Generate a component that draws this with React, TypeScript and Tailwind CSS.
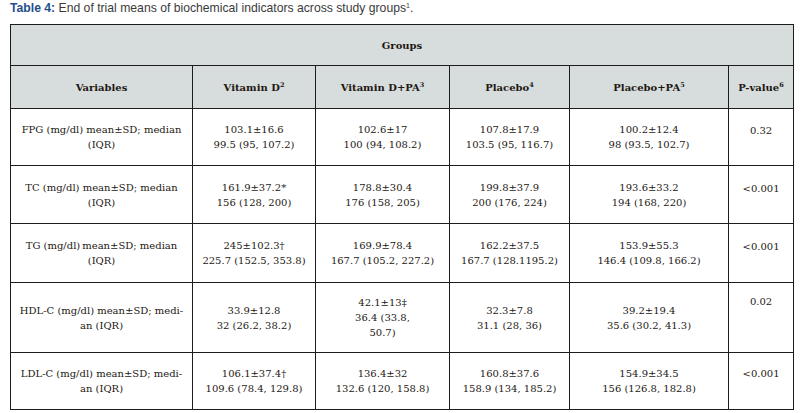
import React from 'react';

type Row = {
  label: string[];
  cells: string[][];
  p: string;
  h: string;
  pPad: string;
};

const rows: Row[] = [
  {
    label: ['FPG (mg/dl) mean±SD; median', '(IQR)'],
    cells: [
      ['103.1±16.6', '99.5 (95, 107.2)'],
      ['102.6±17', '100 (94, 108.2)'],
      ['107.8±17.9', '103.5 (95, 116.7)'],
      ['100.2±12.4', '98 (93.5, 102.7)'],
    ],
    p: '0.32',
    h: 'h-[57px]',
    pPad: 'pt-[14px]',
  },
  {
    label: ['TC (mg/dl) mean±SD; median', '(IQR)'],
    cells: [
      ['161.9±37.2*', '156 (128, 200)'],
      ['178.8±30.4', '176 (158, 205)'],
      ['199.8±37.9', '200 (176, 224)'],
      ['193.6±33.2', '194 (168, 220)'],
    ],
    p: '<0.001',
    h: 'h-[58px]',
    pPad: 'pt-[15px]',
  },
  {
    label: ['TG (mg/dl)\u2009mean±SD; median', '(IQR)'],
    cells: [
      ['245±102.3†', '225.7 (152.5, 353.8)'],
      ['169.9±78.4', '167.7 (105.2, 227.2)'],
      ['162.2±37.5', '167.7 (128.1195.2)'],
      ['153.9±55.3', '146.4 (109.8, 166.2)'],
    ],
    p: '<0.001',
    h: 'h-[59px]',
    pPad: 'pt-[15px]',
  },
  {
    label: ['HDL-C (mg/dl) mean±SD; medi-', 'an (IQR)'],
    cells: [
      ['33.9±12.8', '32 (26.2, 38.2)'],
      ['42.1±13‡', '36.4 (33.8,', '50.7)'],
      ['32.3±7.8', '31.1 (28, 36)'],
      ['39.2±19.4', '35.6 (30.2, 41.3)'],
    ],
    p: '0.02',
    h: 'h-[70px]',
    pPad: 'pt-[11px]',
  },
  {
    label: ['LDL-C (mg/dl) mean±SD; medi-', 'an (IQR)'],
    cells: [
      ['106.1±37.4†', '109.6 (78.4, 129.8)'],
      ['136.4±32', '132.6 (120, 158.8)'],
      ['160.8±37.6', '158.9 (134, 185.2)'],
      ['154.9±34.5', '156 (126.8, 182.8)'],
    ],
    p: '<0.001',
    h: 'h-[57px]',
    pPad: 'pt-[13px]',
  },
];

function Lines({ lines }: { lines: string[] }) {
  return (
    <>
      {lines.map((l, i) => (
        <div key={i} className="whitespace-nowrap">
          {l}
        </div>
      ))}
    </>
  );
}

const cell = 'border border-[#1c1c1c] text-center align-middle p-0';
const sup = 'text-[6.5px] align-[4px] leading-none';

export default function App() {
  return (
    <div className="w-[801px] h-[413px] bg-white pl-[10px] pt-[1px] overflow-hidden">
      {/* caption */}
      <p className="text-[12.2px] leading-[15px] text-[#3a3a3a]" style={{ fontFamily: '"Liberation Sans", Arial, sans-serif' }}>
        <span className="font-bold text-[#1f4f8b]">Table 4:</span> End of trial means of biochemical indicators across study groups
        <span className="text-[7px] align-[4px] leading-none">1</span>.
      </p>

      <table
        className="mt-[8px] w-[783px] table-fixed border-collapse text-[10px] leading-[15px] text-[#1d1813]"
        style={{ fontFamily: '"DejaVu Serif", "Liberation Serif", serif' }}
      >
        <colgroup>
          <col className="w-[182px]" />
          <col className="w-[123px]" />
          <col className="w-[134px]" />
          <col className="w-[120px]" />
          <col className="w-[159px]" />
          <col className="w-[65px]" />
        </colgroup>
        <thead>
          <tr className="h-[41px] bg-[#d7dcdc]">
            <th colSpan={6} className={`${cell} font-bold`}>
              Groups
            </th>
          </tr>
          <tr className="h-[43px] bg-[#d7dcdc]">
            <th className={`${cell} font-bold`}>Variables</th>
            <th className={`${cell} font-bold`}>
              Vitamin D<span className={sup}>2</span>
            </th>
            <th className={`${cell} font-bold`}>
              Vitamin D+PA<span className={sup}>3</span>
            </th>
            <th className={`${cell} font-bold`}>
              Placebo<span className={sup}>4</span>
            </th>
            <th className={`${cell} font-bold`}>
              Placebo+PA<span className={sup}>5</span>
            </th>
            <th className={`${cell} font-bold`}>
              P-value<span className={sup}>6</span>
            </th>
          </tr>
        </thead>
        <tbody>
          {rows.map((r, i) => (
            <tr key={i} className={r.h}>
              <td className={cell}>
                <Lines lines={r.label} />
              </td>
              {r.cells.map((c, j) => (
                <td key={j} className={cell}>
                  <Lines lines={c} />
                </td>
              ))}
              <td className={`border border-[#1c1c1c] text-center align-top p-0 ${r.pPad}`}>{r.p}</td>
            </tr>
          ))}
        </tbody>
      </table>
    </div>
  );
}
